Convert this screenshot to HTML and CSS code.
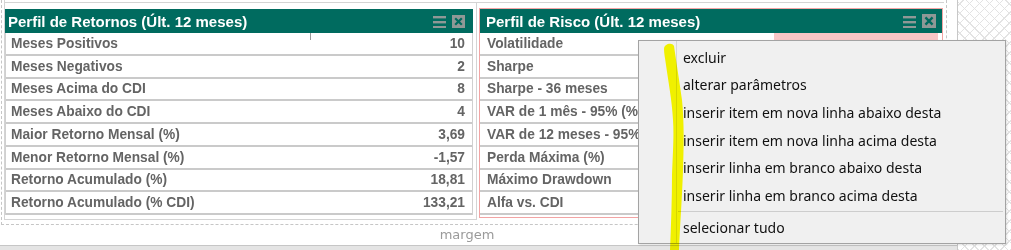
FILE: index.html
```html
<!DOCTYPE html>
<html lang="pt">
<head>
<meta charset="utf-8">
<title>Perfil</title>
<link rel="stylesheet" href="styles.css">
</head>
<body>
<div class="page">
  <div class="work">
    <div class="zone">
      <div class="prev-row"></div>
      <div class="widgets">
        <div class="slot slot-left">
          <section class="panel panel-left">
            <header class="panel-head">
              <span class="panel-title">Perfil de Retornos (Últ. 12 meses)</span>
              <span class="head-icons">
                <svg class="ico-menu" width="13" height="13" viewBox="0 0 13 13"><rect x="0" y="1" width="13" height="2.4"/><rect x="0" y="6" width="13" height="2.4"/><rect x="0" y="11" width="13" height="2.4"/></svg>
                <svg class="ico-close" width="13" height="13" viewBox="0 0 13 13"><rect class="box" x="0" y="0" width="13" height="13"/><path class="x" d="M3.2 3.2 L9.8 9.8 M9.8 3.2 L3.2 9.8"/></svg>
              </span>
            </header>
            <div class="rows">
              <div class="row row-first"><span class="lbl">Meses Positivos</span><span class="val">10</span></div>
              <div class="row"><span class="lbl">Meses Negativos</span><span class="val">2</span></div>
              <div class="row"><span class="lbl">Meses Acima do CDI</span><span class="val">8</span></div>
              <div class="row"><span class="lbl">Meses Abaixo do CDI</span><span class="val">4</span></div>
              <div class="row"><span class="lbl">Maior Retorno Mensal (%)</span><span class="val">3,69</span></div>
              <div class="row"><span class="lbl">Menor Retorno Mensal (%)</span><span class="val">-1,57</span></div>
              <div class="row"><span class="lbl">Retorno Acumulado (%)</span><span class="val">18,81</span></div>
              <div class="row"><span class="lbl">Retorno Acumulado (% CDI)</span><span class="val">133,21</span></div>
            </div>
          </section>
        </div>
        <div class="slot slot-right">
          <section class="panel panel-right">
            <header class="panel-head">
              <span class="panel-title">Perfil de Risco (Últ. 12 meses)</span>
              <span class="head-icons">
                <svg class="ico-menu" width="13" height="13" viewBox="0 0 13 13"><rect x="0" y="1" width="13" height="2.4"/><rect x="0" y="6" width="13" height="2.4"/><rect x="0" y="11" width="13" height="2.4"/></svg>
                <svg class="ico-close" width="14" height="14" viewBox="0 0 13 13"><rect class="box" x="0" y="0" width="13" height="13"/><path class="x" d="M3.2 3.2 L9.8 9.8 M9.8 3.2 L3.2 9.8"/></svg>
              </span>
            </header>
            <div class="rows">
              <div class="row rrow"><span class="lbl">Volatilidade</span><span class="cell cell-sel"></span></div>
              <div class="row rrow"><span class="lbl">Sharpe</span><span class="cell"></span></div>
              <div class="row rrow"><span class="lbl">Sharpe - 36 meses</span><span class="cell"></span></div>
              <div class="row rrow"><span class="lbl">VAR de 1 mês - 95% (%)</span><span class="cell"></span></div>
              <div class="row rrow"><span class="lbl">VAR de 12 meses - 95% (%)</span><span class="cell"></span></div>
              <div class="row rrow"><span class="lbl">Perda Máxima (%)</span><span class="cell"></span></div>
              <div class="row rrow"><span class="lbl">Máximo Drawdown</span><span class="cell"></span></div>
              <div class="row rrow"><span class="lbl">Alfa vs. CDI</span><span class="cell"></span></div>
            </div>
          </section>
        </div>
      </div>
    </div>
    <div class="margem">margem</div>
    <div class="bottom-band"></div>
  </div>
  <div class="hatch"></div>

  <div class="ctx-menu">
    <div class="gutter"></div>
    <ul class="items">
      <li class="item">excluir</li>
      <li class="item">alterar parâmetros</li>
      <li class="item">inserir item em nova linha abaixo desta</li>
      <li class="item">inserir item em nova linha acima desta</li>
      <li class="item">inserir linha em branco abaixo desta</li>
      <li class="item">inserir linha em branco acima desta</li>
      <li class="sep"></li>
      <li class="item">selecionar tudo</li>
    </ul>
  </div>

  <svg class="highlight" width="30" height="210" viewBox="0 0 30 210">
    <path d="M4,9 C4,4 12,2 14,6 C16,20 20,45 22,60 C24,80 24,100 23,130 C22,160 20,185 19,210 L10,210 C11,185 12,160 12,135 C13,110 14,95 13,80 C12,60 8,40 6,25 C5,18 4,13 4,9 Z"/>
  </svg>
</div>
</body>
</html>
```

FILE: styles.css
```css
* { box-sizing: border-box; }

html, body {
  margin: 0;
  padding: 0;
  background: #ffffff;
}

body {
  width: 1011px;
  height: 250px;
  overflow: hidden;
  font-family: "Liberation Sans", Arial, sans-serif;
}

.page {
  position: relative;
  display: flex;
  width: 1011px;
  height: 250px;
}

.work {
  width: 958px;
  height: 250px;
  border-right: 1px solid #c8c8c8;
  display: flex;
  flex-direction: column;
}

.zone {
  margin-left: 1px;
  width: 946px;
  height: 225px;
  border-left: 1px dashed #c6c6c6;
  border-right: 1px dashed #c6c6c6;
  border-bottom: 1px dashed #c6c6c6;
}

.prev-row {
  margin-left: 2px;
  width: 940px;
  height: 3px;
  border-left: 1px solid #d4d4d4;
  border-bottom: 1px solid #d4d4d4;
}

.widgets {
  display: flex;
  margin-left: 2px;
  align-items: flex-start;
}

.slot-left {
  width: 473px;
  height: 217px;
  border-left: 1px solid #d4d4d4;
  border-right: 1px solid #d4d4d4;
  border-bottom: 1px solid #d4d4d4;
  padding: 6px 3px 0 0;
}

.slot-right {
  margin-left: 2px;
  margin-top: 5px;
  width: 464px;
  height: 210px;
  border: 1px solid #f2a4a4;
}

.panel-left { width: 468px; }
.panel-right { width: 462px; }

.panel-head {
  height: 24px;
  background: #006b5f;
  color: #ffffff;
  display: flex;
  align-items: center;
  padding: 0 8px 0 3px;
}

.panel-right .panel-head {
  padding: 0 6px 0 6px;
}

.panel-title {
  font-weight: bold;
  font-size: 15px;
  white-space: nowrap;
}

.head-icons {
  margin-left: auto;
  display: flex;
  align-items: center;
  gap: 6px;
}

.ico-menu rect { fill: #8f9896; }
.ico-close .box { fill: #8f9896; }
.ico-close .x { stroke: #006b5f; stroke-width: 2.2; fill: none; }

.rows {
  display: flex;
  flex-direction: column;
}

.panel-left .rows {
  border-left: 1px solid #d0d0d0;
  border-right: 1px solid #d0d0d0;
}

.row {
  height: 22.75px;
  border-bottom: 2px solid #cacaca;
  display: flex;
  align-items: center;
  justify-content: space-between;
  padding: 0 7px 0 5px;
  color: #646464;
  font-weight: bold;
  font-size: 13.75px;
  white-space: nowrap;
}

.row-first {
  background: linear-gradient(#9a9a9a, #9a9a9a) no-repeat 304px 0 / 1px 7px;
}

.rrow {
  padding: 0 4px 0 7px;
  align-items: stretch;
}

.rrow .lbl {
  display: flex;
  align-items: center;
}

.cell {
  width: 164px;
}

.cell-sel {
  background: #f8c6c6;
}

.margem {
  width: 934px;
  height: 20px;
  line-height: 20px;
  text-align: center;
  font-family: "DejaVu Sans", sans-serif;
  font-size: 13px;
  color: #9a9a9a;
}

.bottom-band {
  height: 5px;
  border-top: 1px solid #c6c6c6;
  background: #e4e4e4;
}

.hatch {
  flex: 1;
  height: 250px;
  background-color: #ffffff;
  background-image:
    repeating-linear-gradient(45deg, #e3e3e3 0 1px, transparent 1px 7px),
    repeating-linear-gradient(-45deg, #e3e3e3 0 1px, transparent 1px 7px);
}

.ctx-menu {
  position: absolute;
  left: 638px;
  top: 40px;
  width: 368px;
  height: 204px;
  background: #f0f0f0;
  border: 1px solid #a3a3a3;
  box-shadow: 1px 1px 2px rgba(0, 0, 0, 0.12);
  display: flex;
}

.gutter {
  width: 38px;
  border-right: 1px solid #d6d6d6;
}

.items {
  list-style: none;
  margin: 0;
  padding: 2.5px 2px 0 0;
  flex: 1;
  font-family: "Noto Sans", sans-serif;
  font-size: 14px;
  color: #111111;
}

.item {
  height: 27.7px;
  line-height: 27.7px;
  padding-left: 6px;
  white-space: nowrap;
}

.sep {
  height: 4px;
  padding-top: 1px;
  margin-left: 1px;
}

.sep::after {
  content: "";
  display: block;
  height: 1px;
  background: #cdcdcd;
}

.highlight {
  position: absolute;
  left: 660px;
  top: 40px;
  mix-blend-mode: multiply;
}

.highlight path { fill: #ffff00; }
```
